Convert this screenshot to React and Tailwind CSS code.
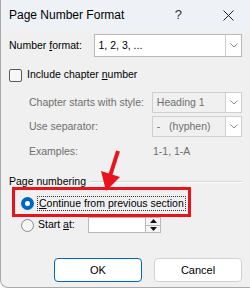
import React from 'react';

function Combo({ value, disabled, className }) {
  return (
    <div
      className={`flex h-full border ${disabled ? 'border-[#cfcfcf] bg-[#f0f0f0] text-[#6e6e6e]' : 'border-[#b9b9b9] bg-white text-black'} ${className}`}
    >
      <div className="flex flex-1 items-center pl-[4px] whitespace-pre">{value}</div>
      <div className="flex w-[16px] items-center justify-center border-l border-[#cfcfcf] bg-white">
        <svg width="8" height="5" viewBox="0 0 8 5">
          <path d="M0.5 0.5 L4 4 L7.5 0.5" fill="none" stroke="#8a8a8a" strokeWidth="1" />
        </svg>
      </div>
    </div>
  );
}

function Radio({ checked }) {
  if (checked) {
    return (
      <div className="flex h-[13px] w-[13px] items-center justify-center rounded-full bg-[#0067c0]">
        <div className="h-[5px] w-[5px] rounded-full bg-white" />
      </div>
    );
  }
  return <div className="h-[13px] w-[13px] rounded-full border border-[#8a8a8a] bg-[#f7f7f7]" />;
}

export default function App() {
  return (
    <div
      className="relative h-[290px] w-[250px] overflow-hidden bg-white text-[10.5px] text-black"
      style={{ fontFamily: '"Liberation Sans", Arial, sans-serif' }}
    >
      <div className="flex h-[288px] flex-col overflow-hidden rounded-bl-[8px] border-b border-l border-[#a9a9a9] bg-[#f0f0f0]">
        <div className="flex h-[30px] items-center bg-[#eef2f7] pl-2 text-[12px]">
          <span className="flex-1">Page Number Format</span>
          <span className="mr-[41px] text-[13px] text-[#333]">?</span>
          <svg width="11" height="11" viewBox="0 0 11 11" className="mr-[16px]">
            <path d="M0.5 0.5 L10.5 10.5 M10.5 0.5 L0.5 10.5" stroke="#222" strokeWidth="1" />
          </svg>
        </div>

        <div className="flex flex-col px-2">
          <div className="mt-[4px] flex h-[23px] items-center">
            <span className="w-[86px]">
              Number <u>f</u>ormat:
            </span>
            <Combo value="1, 2, 3, ..." className="w-[151px]" />
          </div>

          <div className="mt-[11px] flex h-[14px] items-center gap-[5px]">
            <div className="h-[13px] w-[13px] rounded-[2px] border border-[#5c5c5c] bg-[#f7f7f7]" />
            <span>
              Include chapter <u>n</u>umber
            </span>
          </div>

          <div className="mt-[10px] flex h-[21px] items-center pl-5 text-[#6e6e6e]">
            <span className="w-[124px]">Chapter starts with style:</span>
            <Combo value="Heading 1" disabled className="w-[91px]" />
          </div>

          <div className="mt-[3px] flex h-[21px] items-center pl-5 text-[#6e6e6e]">
            <span className="w-[124px]">Use separator:</span>
            <Combo value="-   (hyphen)" disabled className="w-[91px]" />
          </div>

          <div className="mt-[8px] flex h-[14px] items-center pl-5 text-[#6e6e6e]">
            <span className="w-[124px]">Examples:</span>
            <span>1-1, 1-A</span>
          </div>

          <div className="mt-[16px] flex h-[14px] items-center">
            <span className="whitespace-nowrap">Page numbering</span>
            <div className="ml-[4px] flex-1 border-t border-b border-t-[#d8d8d8] border-b-white" />
          </div>

          <div className="mt-[6px] flex h-[16px] items-center pl-3">
            <Radio checked />
            <span className="ml-[3px] border border-dotted border-[#333] px-[1px] leading-[13px]">
              <u>C</u>ontinue from previous section
            </span>
          </div>

          <div className="mt-[6px] flex h-[16px] items-center pl-3">
            <Radio />
            <span className="ml-[4px] w-[50px]">
              Start <u>a</u>t:
            </span>
            <div className="flex h-[16px] w-[73px] border border-[#b9b9b9] bg-white">
              <div className="flex-1" />
              <div className="flex w-[15px] flex-col border-l border-[#b9b9b9]">
                <div className="flex flex-1 items-center justify-center border-b border-[#b9b9b9] bg-[#f5f5f5]">
                  <svg width="7" height="4" viewBox="0 0 7 4">
                    <path d="M0 4 L3.5 0 L7 4 Z" fill="#111" />
                  </svg>
                </div>
                <div className="flex flex-1 items-center justify-center bg-[#f5f5f5]">
                  <svg width="7" height="4" viewBox="0 0 7 4">
                    <path d="M0 0 L3.5 4 L7 0 Z" fill="#111" />
                  </svg>
                </div>
              </div>
            </div>
          </div>

          <div className="mt-[25px] ml-[45px] flex gap-[12px]">
            <button
              type="button"
              className="h-[24px] w-[89px] rounded-[4px] border border-[#0067c0] bg-white text-[11px]"
            >
              OK
            </button>
            <button
              type="button"
              className="h-[24px] w-[89px] rounded-[4px] border border-[#d0d0d0] bg-white text-[11px]"
            >
              Cancel
            </button>
          </div>
        </div>
      </div>

      <div className="pointer-events-none absolute left-[12px] top-[187px] h-[30px] w-[179px] border-[3px] border-[#e8141c]" />
      <svg className="pointer-events-none absolute left-0 top-0" width="250" height="290" viewBox="0 0 250 290">
        <line x1="118" y1="151" x2="110" y2="176" stroke="#e8141c" strokeWidth="4" />
        <path d="M106 191 L101 171 L120 177 Z" fill="#e8141c" />
      </svg>
    </div>
  );
}
